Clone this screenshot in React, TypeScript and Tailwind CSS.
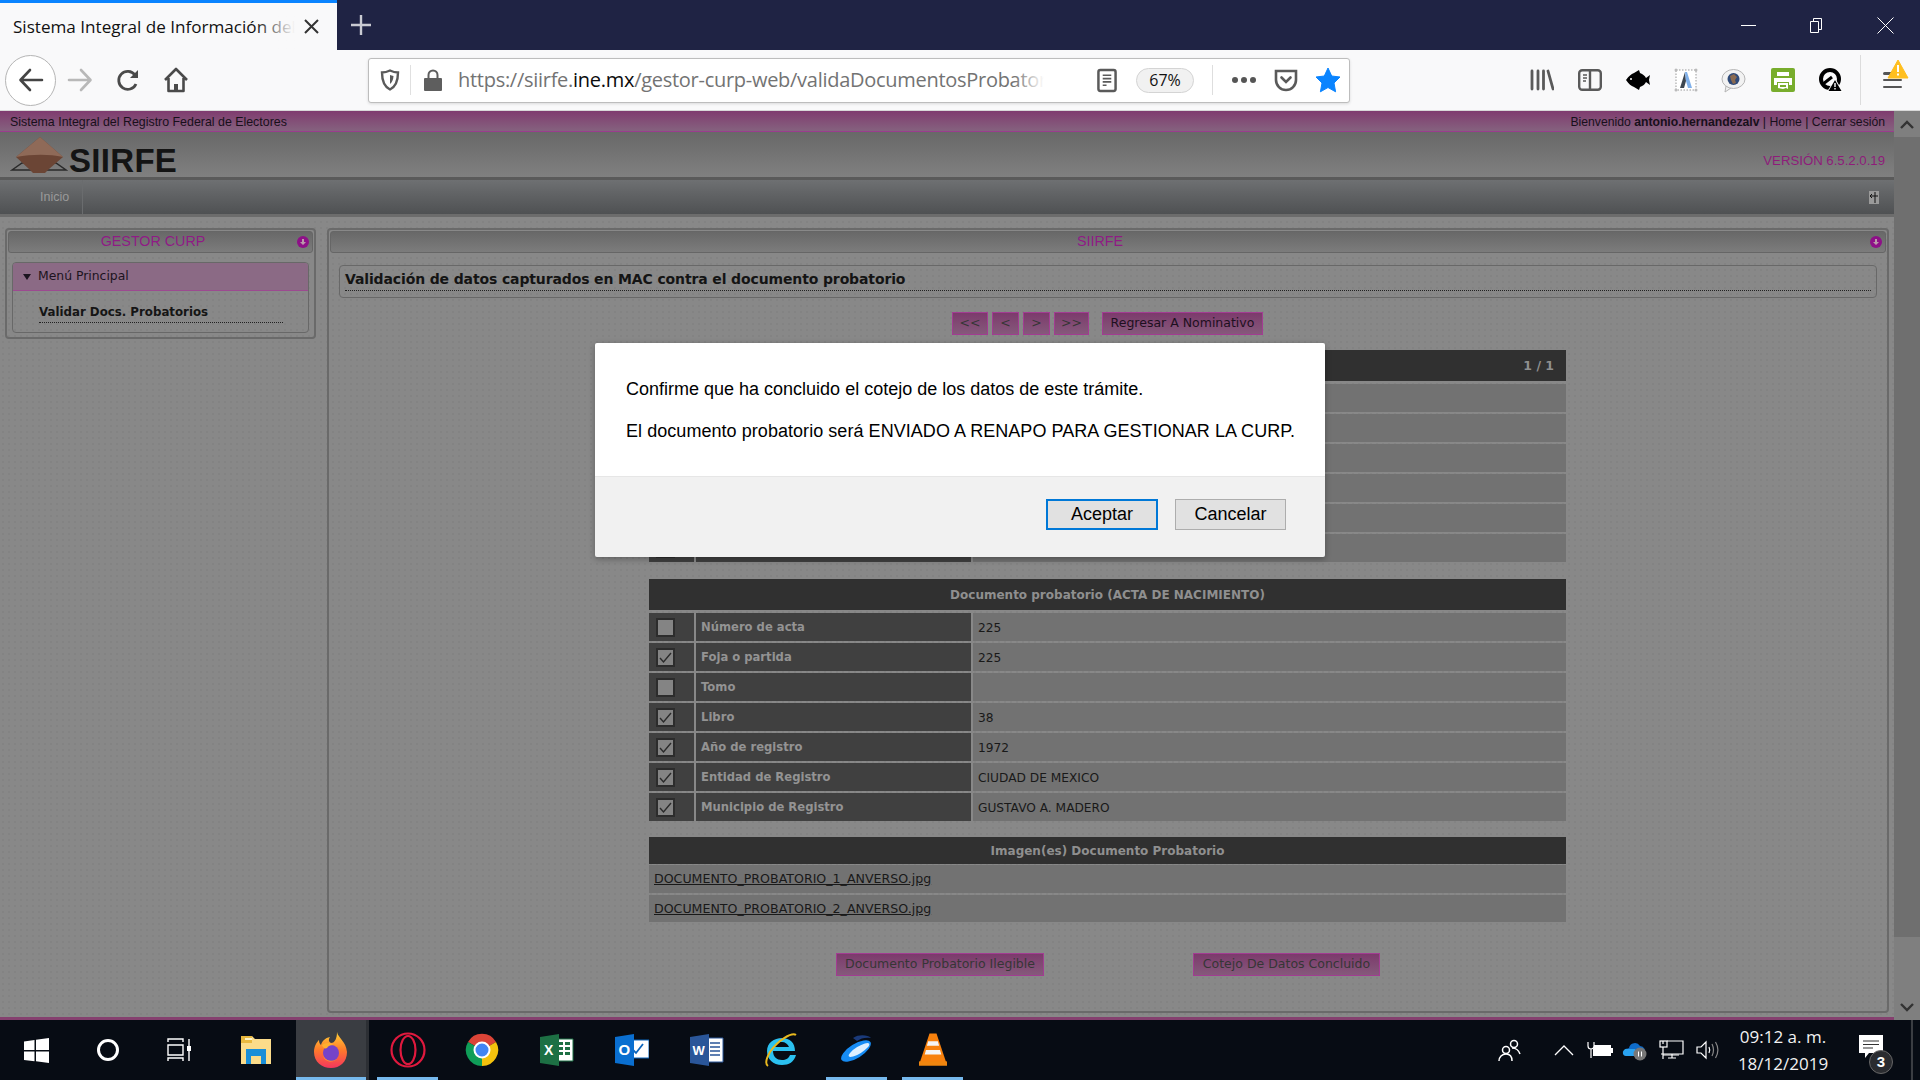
import React from "react";

const dv = "font-['DejaVu_Sans',sans-serif]";
const lib = "font-['Liberation_Sans',sans-serif]";
const pattern = "bg-[#888888] bg-[radial-gradient(circle,#838383_1px,transparent_1.2px)] bg-[size:6px_6px]";

const Check = ({ on }: { on: boolean }) => (
  <div className="w-[19px] h-[19px] border-2 border-[#2c2c2c] bg-[#848484] flex items-center justify-center">
    {on && (
      <svg width="15" height="15" viewBox="0 0 15 15" fill="none" stroke="#2a2a2a" strokeWidth="1.4">
        <path d="M2 8l3.5 4L13 3" />
      </svg>
    )}
  </div>
);

const Row = ({ label, value, on }: { label: string; value: string; on: boolean }) => (
  <div className={`grid grid-cols-[45px_275px_1fr] gap-x-[2px] h-[28px] ${dv}`}>
    <div className="bg-[#404040] flex items-center pl-[7px]">
      <Check on={on} />
    </div>
    <div className="bg-[#404040] flex items-center pl-[5px] pt-[2px] font-bold text-[#939393] text-[11.6px]">{label}</div>
    <div className="bg-[#727272] flex items-center pl-[5px] pt-[2px] text-[#191919] text-[12.2px]">{value}</div>
  </div>
);

const Head = ({ children, h }: { children: React.ReactNode; h: string }) => (
  <div className={`${h} bg-[#303030] flex items-center justify-center font-bold text-[12px] text-[#8f8f8f] ${dv}`}>{children}</div>
);

const PBtn = ({ children, w, dark }: { children: React.ReactNode; w: string; dark?: boolean }) => (
  <div
    className={`${w} h-[23px] border border-[#a23c92] bg-gradient-to-b from-[#7c3a6c] to-[#85597b] flex items-center justify-center text-[12.5px] whitespace-nowrap ${dv} ${
      dark ? "text-[#1d1020]" : "text-[#363636]"
    }`}
  >
    {children}
  </div>
);

const PanelHead = ({ title, center }: { title: string; center: string }) => (
  <div className="relative h-[22px] mx-[1px] mt-[1px] rounded-[3px] border border-[#666] bg-gradient-to-b from-[#686868] to-[#7c7c7c] flex items-center">
    <span className={`text-[#8f1b85] text-[14.3px] text-center ${center} ${lib}`}>{title}</span>
    <span className="absolute right-[3px] top-[4px] w-[12px] h-[12px] rounded-full bg-[#8e1088] flex items-center justify-center">
      <svg width="8" height="8" viewBox="0 0 8 8" fill="#b9a">
        <path d="M3 1h2v3h2L4 7 1 4h2z" />
      </svg>
    </span>
  </div>
);

const Firefox = () => (
  <svg width="36" height="38" viewBox="0 0 36 38">
    <defs>
      <linearGradient id="ffa" x1="0" y1="0" x2="0" y2="1">
        <stop offset="0" stopColor="#ffd235" />
        <stop offset="0.5" stopColor="#ff7a2b" />
        <stop offset="1" stopColor="#f5365e" />
      </linearGradient>
    </defs>
    <path d="M24 1c1 6 9 9 10 20 0 10-7 16-16 16S1 31 1 21C1 15 4 11 6 9c0 3 1 4 2 5 1-4 4-7 9-8-2 3-1 5 1 6 4 0 6-5 6-11z" fill="url(#ffa)" />
    <circle cx="18" cy="22" r="8" fill="#7543c8" />
    <path d="M9 14c3-2 8-3 11 0-3 0-5 1-6 3-2 1-4 0-5-3z" fill="#ffb02e" />
    <path d="M10 24c2 6 10 8 15 3-5 6-14 4-15-3z" fill="#ff9a2e" />
  </svg>
);

const Tb = ({ w, active, line, children }: { w: string; active?: boolean; line?: boolean; children?: React.ReactNode }) => (
  <div className={`relative ${w} h-full flex items-center justify-center ${active ? "bg-[#3a3d42]" : ""}`}>
    {children}
    {line && <span className="absolute left-0 right-0 bottom-0 h-[3px] bg-[#76b9ed]" />}
  </div>
);

export default function App() {
  const top = [0, 1, 2, 3, 4, 5];
  const docs: [string, string, boolean][] = [
    ["Número de acta", "225", false],
    ["Foja o partida", "225", true],
    ["Tomo", "", false],
    ["Libro", "38", true],
    ["Año de registro", "1972", true],
    ["Entidad de Registro", "CIUDAD DE MEXICO", true],
    ["Municipio de Registro", "GUSTAVO A. MADERO", true],
  ];
  return (
    <div className={`relative w-[1920px] h-[1080px] overflow-hidden flex flex-col ${lib}`}>
      {/* Title bar */}
      <div className="h-[50px] bg-[#1f2344] flex items-stretch shrink-0">
        <div className="w-[337px] bg-[#f9f9fa] border-t-[3px] border-[#0a84ff] flex items-center pl-[13px] relative">
          <span className="font-['Open_Sans',sans-serif] text-[17.1px] text-[#111] whitespace-nowrap w-[285px] overflow-hidden">
            Sistema Integral de Información del
          </span>
          <span className="absolute left-[255px] top-0 bottom-0 w-[40px] bg-gradient-to-r from-transparent to-[#f9f9fa]" />
          <svg className="absolute left-[304px] top-[16px]" width="15" height="15" viewBox="0 0 15 15" stroke="#333" strokeWidth="2">
            <path d="M1 1l13 13M14 1L1 14" />
          </svg>
        </div>
        <div className="w-[48px] flex items-center justify-center">
          <svg width="22" height="22" viewBox="0 0 22 22" stroke="#c9cad2" strokeWidth="2.4">
            <path d="M11 1v20M1 11h20" />
          </svg>
        </div>
        <div className="flex-1" />
        <div className="w-[69px] flex items-center justify-center">
          <span className="w-[15px] h-[1px] bg-white" />
        </div>
        <div className="w-[68px] flex items-center justify-center">
          <svg width="15" height="15" viewBox="0 0 15 15" fill="none" stroke="#fff">
            <path d="M3.5 3.5V.5h8v11h-3M.5 3.5h8v11h-8z" />
          </svg>
        </div>
        <div className="w-[69px] flex items-center justify-center">
          <svg width="17" height="17" viewBox="0 0 17 17" stroke="#fff">
            <path d="M.5.5l16 16M16.5.5l-16 16" />
          </svg>
        </div>
      </div>

      {/* Toolbar */}
      <div className="h-[61px] bg-[#f9f9fa] border-b border-[#d8d8d8] flex items-center shrink-0">
        <div className="ml-[5px] w-[51px] h-[51px] rounded-full border border-[#b5b5b5] bg-white flex items-center justify-center">
          <svg width="26" height="26" viewBox="0 0 26 26" fill="none" stroke="#444" strokeWidth="2.6" strokeLinecap="round" strokeLinejoin="round">
            <path d="M12 3L2.5 13 12 23M3 13h21" />
          </svg>
        </div>
        <div className="ml-[11px] w-[26px] flex justify-center">
          <svg width="26" height="26" viewBox="0 0 26 26" fill="none" stroke="#b8b8b8" strokeWidth="2.6" strokeLinecap="round" strokeLinejoin="round">
            <path d="M14 3l9.5 10L14 23M23 13H2" />
          </svg>
        </div>
        <div className="ml-[22px] w-[26px] flex justify-center">
          <svg width="24" height="24" viewBox="0 0 24 24" fill="none" stroke="#4a4a4a" strokeWidth="2.8">
            <path d="M20 16a9 9 0 1 1-1-9" />
            <path d="M22 2v8h-8z" fill="#4a4a4a" stroke="none" />
          </svg>
        </div>
        <div className="ml-[22px] w-[26px] flex justify-center">
          <svg width="26" height="26" viewBox="0 0 26 26" fill="none" stroke="#4a4a4a" strokeWidth="2.6" strokeLinejoin="round">
            <path d="M2 13L13 2l11 11M5.5 11v13h15V11" />
            <path d="M11 24v-7h4v7" fill="#4a4a4a" stroke="none" />
          </svg>
        </div>

        {/* URL bar */}
        <div className="ml-[179px] w-[982px] h-[45px] bg-white border border-[#bdbdbd] rounded-[3px] shadow-[0_1px_3px_rgba(0,0,0,0.12)] flex items-center relative">
          <div className="w-[40px] flex justify-center ml-[1px]">
            <svg width="20" height="22" viewBox="0 0 20 22" fill="none" stroke="#5a5a5a" strokeWidth="2.4">
              <path d="M2 3.5c3 0 6-1 8-2 2 1 5 2 8 2 0 8-2 14-8 17C4 17.5 2 11.5 2 3.5z" />
              <path d="M10 6c1 .5 2 .8 3.500 1-.2 3.500-1.200 6-3.500 8z" fill="#5a5a5a" stroke="none" />
            </svg>
          </div>
          <span className="w-px h-[30px] bg-[#e0e0e0]" />
          <div className="w-[44px] flex justify-center mr-[3px]">
            <svg width="20" height="24" viewBox="0 0 20 24" fill="#5e5e5e">
              <path d="M2 10h2.500V7a5.500 5.500 0 0 1 11 0v3H18a1 1 0 0 1 1 1v11a1 1 0 0 1-1 1H2a1 1 0 0 1-1-1V11a1 1 0 0 1 1-1zm4.500 0h7V7a3.500 3.500 0 0 0-7 0z" />
            </svg>
          </div>
          <div className="relative w-[586px] overflow-hidden whitespace-nowrap font-['Open_Sans',sans-serif] text-[20px] tracking-[-0.28px] text-[#737373]">
            https://siirfe.<span className="text-[#0c0c0d]">ine.mx</span>/gestor-curp-web/validaDocumentosProbatorios
            <span className="absolute right-0 top-0 bottom-0 w-[30px] bg-gradient-to-r from-transparent to-white" />
          </div>
          <div className="ml-[53px] w-[20px] flex justify-center">
            <svg width="21" height="25" viewBox="0 0 21 25" fill="none" stroke="#5a5a5a">
              <rect x="1.500" y="1.500" width="18" height="22" rx="2" strokeWidth="2.600" />
              <path d="M6 7h9M6 10.500h9M6 14h9M6 17.500h4" strokeWidth="1.800" />
            </svg>
          </div>
          <div className="ml-[19px] w-[58px] h-[25px] rounded-full border border-[#d4d4d4] bg-[#f1f1f1] flex items-center justify-center font-['Open_Sans',sans-serif] text-[16px] text-[#111]">
            67%
          </div>
          <span className="ml-[18px] w-px h-[30px] bg-[#dedede]" />
          <div className="ml-[19px] flex gap-[3px]">
            <span className="w-[6px] h-[6px] rounded-full bg-[#555]" />
            <span className="w-[6px] h-[6px] rounded-full bg-[#555]" />
            <span className="w-[6px] h-[6px] rounded-full bg-[#555]" />
          </div>
          <div className="ml-[18px]">
            <svg width="24" height="23" viewBox="0 0 24 23" fill="none" stroke="#5a5a5a" strokeWidth="2.600">
              <path d="M2 2h20v9a10 10 0 0 1-20 0z" />
              <path d="M7.500 8.500L12 13l4.500-4.500" strokeLinecap="round" />
            </svg>
          </div>
          <div className="ml-[17px]">
            <svg width="26" height="26" viewBox="0 0 26 26" fill="#0a84ff">
              <path d="M13 1l3.700 8 8.300 1-6 6 1.600 8.800L13 20.500 5.400 24.800 7 16l-6-6 8.300-1z" stroke="#0a84ff" strokeLinejoin="round" />
            </svg>
          </div>
        </div>

        {/* Extensions */}
        <div className="ml-[179px] w-[25px] flex justify-center">
          <svg width="24" height="22" viewBox="0 0 24 22" stroke="#5a5a5a" strokeWidth="2.800" strokeLinecap="round">
            <path d="M2 2v18M8 2v18M13.500 2v18M18 2l5 18" />
          </svg>
        </div>
        <div className="ml-[24px]">
          <svg width="24" height="22" viewBox="0 0 24 22" fill="none" stroke="#5a5a5a" strokeWidth="2.400">
            <rect x="1.200" y="1.200" width="21.600" height="19.600" rx="3" />
            <path d="M12 1v20" />
            <path d="M5 6h4M5 9h4M5 12h3" strokeWidth="1.500" />
          </svg>
        </div>
        <div className="ml-[24px]">
          <svg width="25" height="20" viewBox="0 0 25 20" fill="#000">
            <path d="M0 10c3-4 5-6 8-7l5-3 1 3c3 1 5 3 6 5l4-3-1 5 1 5-4-3c-1 2-3 4-6 5l-1 3-5-3c-3-1-5-3-8-7z" />
            <circle cx="5" cy="9" r="1" fill="#fff" />
          </svg>
        </div>
        <div className="ml-[23px]">
          <svg width="24" height="24" viewBox="0 0 24 24">
            <rect x="2" y="2" width="20" height="20" fill="#fff" stroke="#999" strokeDasharray="1.500 1.500" />
            <circle cx="2" cy="2" r="1.500" fill="#bbb" />
            <circle cx="22" cy="2" r="1.500" fill="#bbb" />
            <circle cx="2" cy="22" r="1.500" fill="#bbb" />
            <circle cx="22" cy="22" r="1.500" fill="#bbb" />
            <path d="M11 4L6 20h4l2-7z" fill="#3d4650" />
            <path d="M11 4h2l5 16h-4l-2-7z" fill="#7fb0ea" />
          </svg>
        </div>
        <div className="ml-[23px]">
          <svg width="25" height="25" viewBox="0 0 25 25">
            <path d="M5 18l-1 6 6-4z" fill="#f2f2f2" stroke="#b5b5b5" />
            <ellipse cx="12.500" cy="11" rx="11.500" ry="9.500" fill="#f2f2f2" stroke="#b5b5b5" />
            <circle cx="12.500" cy="11" r="6" fill="#2f4a78" />
            <path d="M9 8l4-2 3 3-2 3 1 3-3 1-2-4z" fill="#8a6a50" />
          </svg>
        </div>
        <div className="ml-[25px]">
          <svg width="24" height="24" viewBox="0 0 24 24">
            <rect width="24" height="24" rx="2" fill="#78ad2c" />
            <path d="M6 4h12v4H6z" fill="#fff" />
            <path d="M3 10h18v7h-3v-3H6v3H3z" fill="#fff" />
            <path d="M7 15h10v6l-2-1-3 1-5-1z" fill="#fff" />
            <path d="M9 17h6v2H9z" fill="#78ad2c" />
          </svg>
        </div>
        <div className="ml-[24px]">
          <svg width="24" height="24" viewBox="0 0 24 24">
            <circle cx="11" cy="11" r="9" fill="none" stroke="#000" strokeWidth="4" />
            <path d="M4 16L13 9" stroke="#000" strokeWidth="3" />
            <path d="M16 10l8 14H8z" fill="#fff" />
            <path d="M16 12l6.500 11h-13z" fill="#000" />
            <path d="M15.300 15h1.400v4h-1.400zM15.300 20h1.400v1.500h-1.400z" fill="#fff" />
          </svg>
        </div>
        <span className="ml-[17px] w-px h-[50px] bg-[#dcdcdc]" />
        <div className="ml-[22px] relative w-[19px] h-[16px] flex flex-col justify-between">
          <span className="h-[2.500px] bg-[#555] rounded-full" />
          <span className="h-[2.500px] bg-[#555] rounded-full" />
          <span className="h-[2.500px] bg-[#555] rounded-full" />
          <svg className="absolute left-[4px] top-[-13px]" width="22" height="20" viewBox="0 0 22 20">
            <path d="M11 1l10 18H1z" fill="#ffbf1f" stroke="#ffbf1f" strokeLinejoin="round" />
            <path d="M10 6h2v7h-2zM10 14.500h2v2h-2z" fill="#fff" />
          </svg>
        </div>
      </div>

      {/* Page */}
      <div className="h-[909px] flex shrink-0">
        <div className={`flex-1 flex flex-col ${pattern}`}>
          <div className="h-[21px] border-b border-[#9a3c8e] bg-gradient-to-b from-[#7f3b6f] to-[#85627f] flex items-center justify-between pl-[10px] pr-[9px] pt-[2px] text-[#17101a]">
            <span className="text-[12.4px]">Sistema Integral del Registro Federal de Electores</span>
            <span className="text-[12.2px]">
              Bienvenido <b>antonio.hernandezalv</b> | Home | Cerrar sesión
            </span>
          </div>
          <div className="h-[45px] bg-gradient-to-b from-[#686868] to-[#808080] flex items-center pl-[10px] pr-[9px] justify-between">
            <div className="flex items-center">
              <svg width="58" height="40" viewBox="0 0 58 40">
                <path d="M2 35L12 28h34l10 7z" fill="none" stroke="#2a2a2a" strokeWidth="1.500" />
                <path d="M30 2l23 20-14 12-4 4H23l-4-4L6 22z" fill="#6b4535" />
                <path d="M30 2l23 20c-14-3-30-3-47 0z" fill="#8f6a58" />
              </svg>
              <span className="font-bold text-[33px] leading-none text-[#141414] tracking-[0.3px] ml-[1px] mt-[12px]">SIIRFE</span>
            </div>
            <span className="text-[#8e1c7a] text-[13.2px] mt-[13px]">VERSIÓN 6.5.2.0.19</span>
          </div>
          <div className="h-[40px] border-t-[3px] border-[#5a5a5a] border-b-[3px] border-b-[#6c6c6c] bg-gradient-to-b from-[#6e7072] to-[#4f5153] flex items-center justify-between pr-[15px]">
            <div className="h-full flex items-center pl-[40px] pr-[13px] border-r border-[#6a6c6e] text-[12.5px] text-[#9a9a9a]">Inicio</div>
            <div className="w-[10px] h-[13px] bg-[#9a9a9a] flex items-center justify-center">
              <svg width="10" height="13" viewBox="0 0 10 13" stroke="#111" fill="none">
                <path d="M1 5h8M6 1v11M1 5l2-2M1 5l2 2" />
              </svg>
            </div>
          </div>

          <div className="flex gap-[11px] pl-[5px] pr-[5px] pt-[11px] flex-1 min-h-0">
            {/* Left panel */}
            <div className="w-[311px] h-[111px] rounded-[4px] border-2 border-[#6a6a6a] shrink-0">
              <PanelHead title="GESTOR CURP" center="w-[288px]" />
              <div className="mx-[5px] mt-[9px] h-[71px] rounded-[4px] border border-[#686868] overflow-hidden">
                <div className="h-[28px] bg-[#8b6a85] border-b border-[#9c4a90] flex items-center pl-[10px] text-[#1c1420]">
                  <svg width="8" height="6" viewBox="0 0 8 6" fill="#1c1420" className="mr-[7px]">
                    <path d="M0 0h8L4 6z" />
                  </svg>
                  <span className={`${dv} text-[12.4px]`}>Menú Principal</span>
                </div>
                <div className={`ml-[26px] mt-[11px] w-[244px] h-[21px] border-b border-dotted border-[#222] font-bold text-[11.8px] leading-[20px] text-[#151515] ${dv}`}>
                  Validar Docs. Probatorios
                </div>
              </div>
            </div>

            {/* Right panel */}
            <div className="flex-1 rounded-[4px] border-2 border-[#6a6a6a] h-[785px] flex flex-col">
              <PanelHead title="SIIRFE" center="w-[1538px]" />
              <div className="mx-[10px] mt-[12px] h-[33px] rounded-[4px] border border-[#686868] px-[5px] pt-[3px] shrink-0">
                <div className={`h-[22px] border-b border-dotted border-[#222] font-bold text-[14px] leading-[20px] tracking-[-0.13px] text-[#141414] ${dv}`}>
                  Validación de datos capturados en MAC contra el documento probatorio
                </div>
              </div>
              <div className={`mt-[14px] ml-[623px] flex items-stretch gap-[4px] ${dv}`}>
                <PBtn w="w-[36px]">{"<<"}</PBtn>
                <PBtn w="w-[27px]">{"<"}</PBtn>
                <PBtn w="w-[27px]">{">"}</PBtn>
                <PBtn w="w-[35px]">{">>"}</PBtn>
                <div className="ml-[9px]">
                  <PBtn w="w-[161px]" dark>
                    Regresar A Nominativo
                  </PBtn>
                </div>
              </div>

              <div className="mt-[15px] ml-[320px] w-[917px] flex flex-col">
                <div className="relative">
                  <Head h="h-[31px]">&nbsp;</Head>
                  <span className={`absolute right-[12px] top-[7px] text-[12.5px] font-bold text-[#8f8f8f] ${dv}`}>1 / 1</span>
                </div>
                <div className="flex flex-col gap-[2px] mt-[3px]">
                  {top.map((i) => (
                    <Row key={i} label="" value="" on={false} />
                  ))}
                </div>
                <div className="mt-[17px]">
                  <Head h="h-[31px]">Documento probatorio (ACTA DE NACIMIENTO)</Head>
                </div>
                <div className="flex flex-col gap-[2px] mt-[3px]">
                  {docs.map((d) => (
                    <Row key={d[0]} label={d[0]} value={d[1]} on={d[2]} />
                  ))}
                </div>
                <div className="mt-[16px]">
                  <Head h="h-[27px]">Imagen(es) Documento Probatorio</Head>
                </div>
                <div className={`mt-[1px] flex flex-col gap-[2px] text-[12.6px] text-[#191919] underline ${dv}`}>
                  <div className="h-[28px] bg-[#727272] flex items-center pl-[5px] pt-[1px]">DOCUMENTO_PROBATORIO_1_ANVERSO.jpg</div>
                  <div className="h-[27px] bg-[#727272] flex items-center pl-[5px] pt-[1px]">DOCUMENTO_PROBATORIO_2_ANVERSO.jpg</div>
                </div>
              </div>
              <div className="mt-[31px] flex">
                <div className="ml-[507px]">
                  <PBtn w="w-[208px]">Documento Probatorio Ilegible</PBtn>
                </div>
                <div className="ml-[149px]">
                  <PBtn w="w-[187px]">Cotejo De Datos Concluido</PBtn>
                </div>
              </div>
            </div>
          </div>
          <div className="h-[3px] bg-[#85406f] shrink-0" />
        </div>

        {/* Scrollbar */}
        <div className="w-[26px] bg-[#7f7f7f] flex flex-col items-center">
          <div className="h-[26px] w-full flex items-center justify-center">
            <svg width="14" height="9" viewBox="0 0 14 9" fill="none" stroke="#333" strokeWidth="2.400">
              <path d="M1 8l6-6 6 6" />
            </svg>
          </div>
          <div className="w-full h-[800px] bg-[#6f6f6f]" />
          <div className="flex-1" />
          <div className="h-[25px] w-full flex items-center justify-center">
            <svg width="14" height="9" viewBox="0 0 14 9" fill="none" stroke="#333" strokeWidth="2.400">
              <path d="M1 1l6 6 6-6" />
            </svg>
          </div>
        </div>
      </div>

      {/* Taskbar */}
      <div className="h-[60px] bg-[#070c14] flex items-stretch shrink-0 text-white relative">
        <Tb w="w-[72px]">
          <svg width="25" height="25" viewBox="0 0 25 25" fill="#fff">
            <path d="M0 3.500l10.500-1.500v10H0zM12 1.800L25 0v12H12zM0 13.500h10.500v9.800L0 22zM12 13.500h13V25l-13-1.800z" />
          </svg>
        </Tb>
        <Tb w="w-[72px]">
          <span className="w-[22px] h-[22px] rounded-full border-[3px] border-white" />
        </Tb>
        <Tb w="w-[72px]">
          <svg width="26" height="24" viewBox="0 0 26 24" fill="none" stroke="#fff" strokeWidth="1.400">
            <path d="M1 4V1h15v3M1 7h15v10H1zM1 23v-3h15v3M22 1v22" />
            <rect x="20" y="8" width="4" height="5" fill="#fff" stroke="none" />
          </svg>
        </Tb>
        <Tb w="w-[80px]">
          <svg width="32" height="30" viewBox="0 0 32 30">
            <path d="M1 1h11l3 3h16v25H1z" fill="#fbdc8a" />
            <path d="M1 1h11v7H1z" fill="#e9b93f" />
            <path d="M5 3h7v2H5z" fill="#fff5c8" />
            <path d="M6 14h20v15h-5V21h-10v8H6z" fill="#1a8fd8" />
          </svg>
        </Tb>
        <Tb w="w-[70px]" active line>
          <Firefox />
        </Tb>
        <span className="w-[3px] bg-[#2c2f34]" />
        <span className="w-[8px]" />
        <Tb w="w-[61px]" line>
          <svg width="36" height="36" viewBox="0 0 36 36" fill="none" stroke="#e0193e" strokeWidth="2.200">
            <ellipse cx="18" cy="18" rx="16.500" ry="16.500" />
            <ellipse cx="18" cy="18" rx="7.500" ry="14" />
          </svg>
        </Tb>
        <Tb w="w-[88px]">
          <svg width="34" height="34" viewBox="0 0 34 34">
            <path d="M17 17L3 9A16 16 0 0 1 31 9z" fill="#db4437" />
            <path d="M17 17L31 9a16 16 0 0 1-14 24z" fill="#f4c20d" />
            <path d="M17 17v16A16 16 0 0 1 3 9z" fill="#0f9d58" />
            <circle cx="17" cy="17" r="7.500" fill="#4285f4" stroke="#fff" strokeWidth="2" />
          </svg>
        </Tb>
        <Tb w="w-[62px]">
          <svg width="34" height="32" viewBox="0 0 34 32">
            <path d="M15 5h18v22H15z" fill="#fff" stroke="#1d7044" />
            <path d="M18 8h5v3h-5zM25 8h5v3h-5zM18 13h5v3h-5zM25 13h5v3h-5zM18 18h5v3h-5zM25 18h5v3h-5z" fill="#1d7044" />
            <path d="M0 3l19-3v32L0 29z" fill="#1d7044" />
            <text x="4" y="21" fontSize="14" fontWeight="bold" fill="#fff" fontFamily="Liberation Sans">X</text>
          </svg>
        </Tb>
        <Tb w="w-[88px]">
          <svg width="34" height="32" viewBox="0 0 34 32">
            <path d="M14 6h20v18H14z" fill="#fff" stroke="#0b64bb" />
            <path d="M17 15l4 4 7-9" fill="none" stroke="#0b64bb" strokeWidth="1.800" />
            <path d="M0 3l19-3v32L0 29z" fill="#0a6fd0" />
            <text x="3.500" y="21" fontSize="15" fontWeight="bold" fill="#fff" fontFamily="Liberation Sans">O</text>
          </svg>
        </Tb>
        <Tb w="w-[62px]">
          <svg width="34" height="32" viewBox="0 0 34 32">
            <path d="M15 4h18v24H15z" fill="#fff" stroke="#2a5699" />
            <path d="M20 9h10M20 13h10M20 17h10M20 21h10" stroke="#2a5699" strokeWidth="1.500" />
            <path d="M0 3l19-3v32L0 29z" fill="#2a5699" />
            <text x="2.500" y="21" fontSize="13" fontWeight="bold" fill="#fff" fontFamily="Liberation Sans">W</text>
          </svg>
        </Tb>
        <Tb w="w-[88px]">
          <svg width="36" height="36" viewBox="0 0 36 36" fill="none">
            <path d="M18 6c8 0 13 5 13 13H9c0 6 4 9 9 9 4 0 7-2 8-5h6c-2 7-7 10-14 10C9 33 3 27 3 19 3 11 10 6 18 6zm-8 9h15c-1-3-4-5-7-5-4 0-7 2-8 5z" fill="#2bc1f0" />
            <path d="M32 3C28 0 14 8 6 20 2 27 1 32 4 34" stroke="#e9b91e" strokeWidth="2" />
          </svg>
        </Tb>
        <Tb w="w-[61px]" line>
          <svg width="38" height="30" viewBox="0 0 38 30">
            <ellipse cx="18" cy="16" rx="17" ry="7" transform="rotate(-32 18 16)" fill="#168cf4" />
            <ellipse cx="21" cy="15" rx="12" ry="3.500" transform="rotate(-32 21 15)" fill="#dcefff" />
            <path d="M15 3c6-4 15-3 18 0-5-1-10 0-14 3z" fill="#1a3a7a" />
          </svg>
        </Tb>
        <span className="w-[15px]" />
        <Tb w="w-[61px]" line>
          <svg width="28" height="40" viewBox="0 0 32 40">
            <path d="M12 1h8l11 33H1z" fill="#f7810d" />
            <path d="M10.500 10h11l1.500 5H9zM8 20h16l1.500 5h-19z" fill="#f5f5f5" />
            <path d="M0 33h32v5H0z" fill="#f0860f" />
          </svg>
        </Tb>
        <div className="flex-1" />
        <div className="flex items-center">
          <svg width="24" height="24" viewBox="0 0 24 24" fill="none" stroke="#fff" strokeWidth="1.500" className="mr-[32px]">
            <circle cx="16" cy="6" r="3.500" />
            <circle cx="8" cy="12" r="3.500" />
            <path d="M1 23c0-4 3-7 7-7s6 3 6 7M14 10c4 0 7 3 8 6" />
          </svg>
          <svg width="20" height="11" viewBox="0 0 20 11" fill="none" stroke="#fff" strokeWidth="1.300" className="mr-[13px]">
            <path d="M1 10l9-9 9 9" />
          </svg>
          <svg width="26" height="18" viewBox="0 0 26 18" className="mr-[9px]">
            <rect x="6" y="4" width="18" height="11" fill="#fff" />
            <rect x="24" y="7" width="2" height="5" fill="#fff" />
            <path d="M1 1v4a3 3 0 0 0 6 0V1M4 8v9" fill="#070c14" stroke="#fff" strokeWidth="1.200" />
          </svg>
          <svg width="26" height="22" viewBox="0 0 26 22" className="mr-[11px]">
            <path d="M7 9a6 6 0 0 1 11-2 5 5 0 0 1 4 8H4a4 4 0 0 1 3-6z" fill="#0f6cc9" />
            <path d="M1 15a4 4 0 0 1 5-5h7l3 7H4a3 3 0 0 1-3-2z" fill="#29a2f0" />
            <circle cx="18" cy="15" r="6.500" fill="#777" />
            <path d="M16.500 12.500v5M19.500 12.500v5" stroke="#fff" />
          </svg>
          <svg width="25" height="20" viewBox="0 0 25 20" fill="none" stroke="#fff" strokeWidth="1.200" className="mr-[12px]">
            <path d="M8 1h16v13H2" />
            <rect x="1" y="1" width="7" height="6" />
            <path d="M4 1v3M4 7v12M4 15h16M13 14v4M9 18h8" />
          </svg>
          <svg width="24" height="20" viewBox="0 0 24 20" fill="none" stroke="#fff" strokeWidth="1.200" className="mr-[13px]">
            <path d="M1 7h4l5-5v16l-5-5H1z" />
            <path d="M13 7c1 2 1 4 0 6" />
            <path d="M16 4c2 4 2 8 0 12M19.500 2c3 5 3 11 0 16" stroke="#888" />
          </svg>
          <div className="w-[100px] text-center font-['Open_Sans',sans-serif] text-[17px] leading-[27px] text-[#f2f2f2] whitespace-nowrap">
            <div>09:12 a. m.</div>
            <div>18/12/2019</div>
          </div>
          <div className="relative w-[87px] h-full flex items-center justify-center">
            <svg width="24" height="24" viewBox="0 0 24 24" className="-mt-[6px] -ml-[12px]">
              <path d="M0 0h24v18H10l-4 5v-5H0z" fill="#fff" />
              <path d="M4 6h16M4 9.500h16M4 13h10" stroke="#333" strokeWidth="1.200" />
            </svg>
            <span className="absolute left-[36px] top-[30px] w-[24px] h-[24px] rounded-full bg-[#2a2c30] border border-[#666] flex items-center justify-center text-[15px] font-bold">
              3
            </span>
            <span className="absolute right-[7px] top-0 bottom-0 w-[2px] bg-[#3a3d42]" />
          </div>
        </div>
      </div>

      {/* Modal */}
      <div className="absolute left-[595px] top-[343px] w-[730px] h-[214px] rounded-[2px] shadow-[0_2px_6px_rgba(0,0,0,0.3)] flex flex-col overflow-hidden">
        <div className="h-[134px] bg-white border-b border-[#e6e6e6] pl-[31px] pt-[34px] text-[18px] leading-[24px] text-black whitespace-nowrap">
          <div>Confirme que ha concluido el cotejo de los datos de este trámite.</div>
          <div className="mt-[18px] tracking-[0.05px]">El documento probatorio será ENVIADO A RENAPO PARA GESTIONAR LA CURP.</div>
        </div>
        <div className="flex-1 bg-[#f1f1f1] flex justify-end items-start pt-[22px] pr-[39px] gap-[17px]">
          <div className="w-[112px] h-[31px] border-2 border-[#0078d7] bg-[#e1e1e1] flex items-center justify-center text-[18px] text-black">Aceptar</div>
          <div className="w-[111px] h-[31px] border border-[#adadad] bg-[#e1e1e1] flex items-center justify-center text-[18px] text-black">Cancelar</div>
        </div>
      </div>
    </div>
  );
}
